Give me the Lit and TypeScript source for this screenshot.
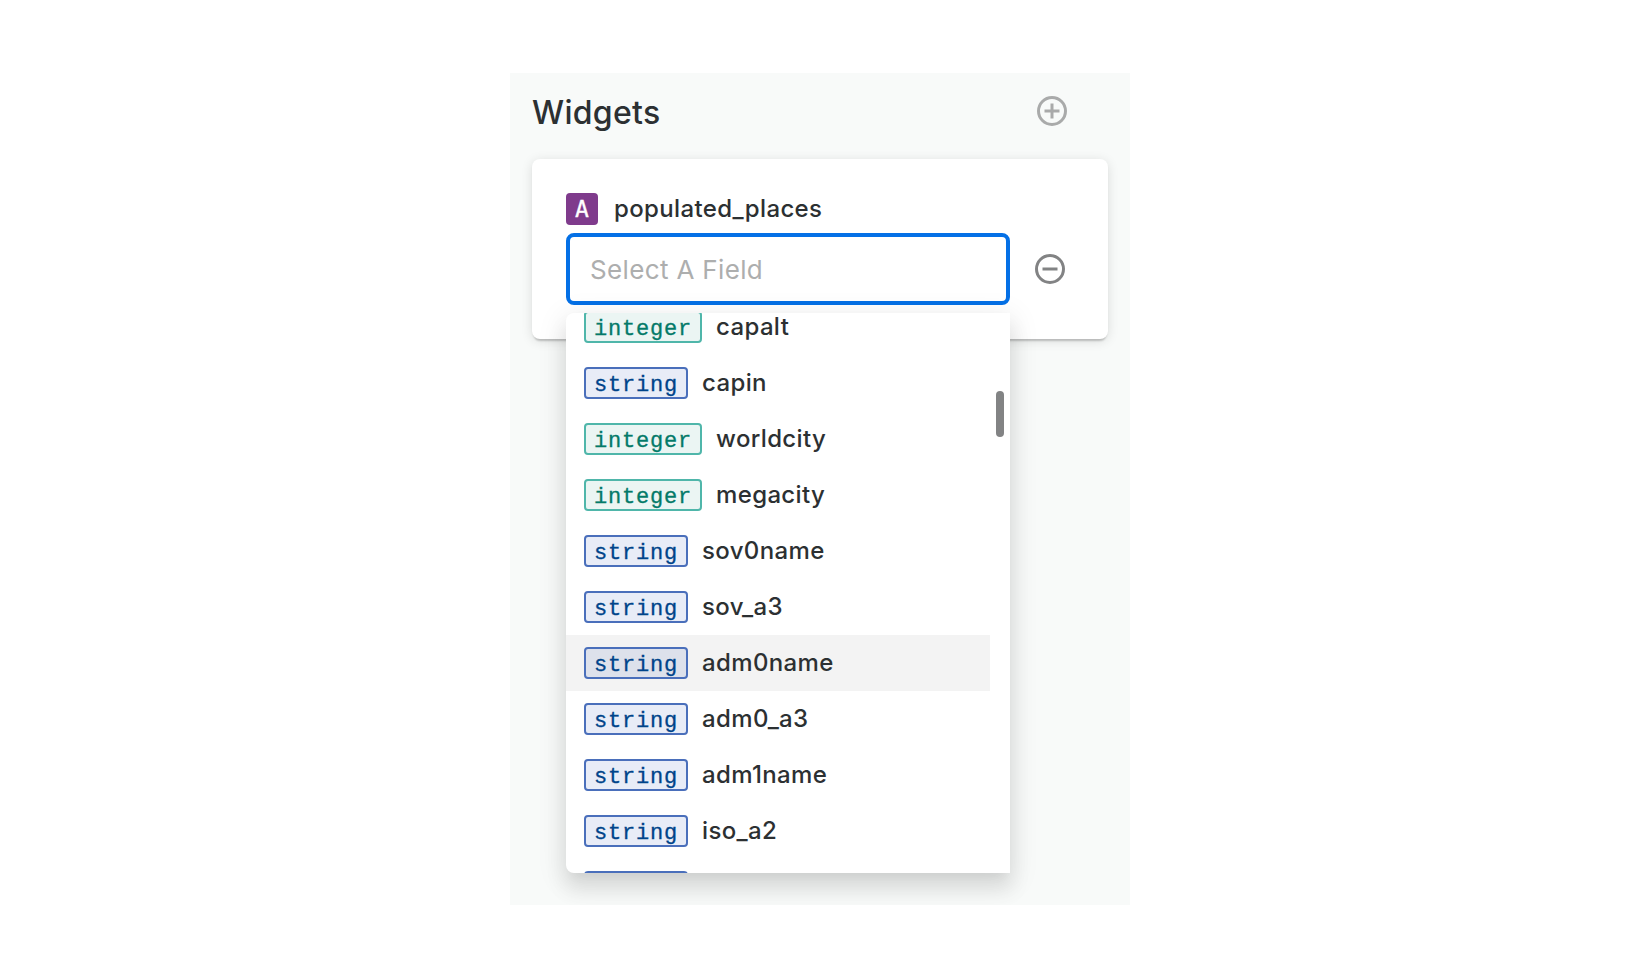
import { LitElement, html, css } from "lit";
import { customElement, property } from "lit/decorators.js";
import { classMap } from "lit/directives/class-map.js";

type FieldType = "integer" | "string";

@customElement("field-option")
class FieldOption extends LitElement {
  @property() type: FieldType = "string";
  @property() name = "";
  @property({ type: Boolean }) hovered = false;

  static styles = css`
    :host { display: block; }
    .row {
      display: flex;
      align-items: center;
      gap: 14px;
      height: 56px;
      padding-left: 18px;
      margin-right: 20px;
      box-sizing: border-box;
    }
    .hovered { background: #f3f3f3; }
    .tag {
      box-sizing: border-box;
      height: 32px;
      padding: 3px 8px 0 8px;
      border: 2px solid;
      border-radius: 4px;
      font: 400 22px/28px "Liberation Mono", monospace;
      letter-spacing: 0.8px;
      -webkit-text-stroke: 0.3px currentColor;
      white-space: nowrap;
    }
    .integer { color: #047a69; background: #ebf5f3; border-color: #4fb6aa; }
    .string { color: #00448a; background: #e8ecf7; border-color: #4a6fbb; }
    .hovered .string { background: #dde1eb; }
    .name { color: #2c3032; white-space: nowrap; }
  `;

  render() {
    return html`<div class=${classMap({ row: true, hovered: this.hovered })}>
      <span class="tag ${this.type}">${this.type}</span>
      <span class="name">${this.name}</span>
    </div>`;
  }
}

@customElement("app-root")
class AppRoot extends LitElement {
  private fields: { type: FieldType; name: string; hovered?: boolean }[] = [
    { type: "integer", name: "capalt" },
    { type: "string", name: "capin" },
    { type: "integer", name: "worldcity" },
    { type: "integer", name: "megacity" },
    { type: "string", name: "sov0name" },
    { type: "string", name: "sov_a3" },
    { type: "string", name: "adm0name", hovered: true },
    { type: "string", name: "adm0_a3" },
    { type: "string", name: "adm1name" },
    { type: "string", name: "iso_a2" },
    { type: "string", name: "" },
  ];

  static styles = css`
    :host {
      display: flex;
      justify-content: center;
      align-items: flex-start;
      box-sizing: border-box;
      height: 974px;
      padding-top: 73px;
      background: #fff;
      color: #2c3032;
      font: 500 24px/32px Inter, sans-serif;
      letter-spacing: 0.36px;
    }
    .panel {
      box-sizing: border-box;
      width: 620px;
      height: 832px;
      padding: 0 22px;
      background: #f8faf9;
      overflow: hidden;
    }
    .head {
      display: flex;
      align-items: center;
      justify-content: space-between;
      height: 76px;
      padding: 0 38px 10px 0;
      box-sizing: border-box;
      margin-bottom: 10px;
    }
    .title {
      margin: 0;
      padding-top: 13px;
      font-size: 32px;
      line-height: 40px;
      font-weight: 500;
      letter-spacing: 0.3px;
    }
    .head .icon { margin-top: 10px; }
    .icon { display: block; width: 36px; height: 36px; flex: none; }
    .add { color: #a9aaaa; }
    .remove { color: #828384; }
    .card {
      box-sizing: border-box;
      height: 180px;
      padding: 34px;
      background: #fff;
      border-radius: 8px;
      box-shadow: 0 4px 2px -2px rgba(0,0,0,.16), 0 2px 2px rgba(0,0,0,.04), 0 2px 12px rgba(0,0,0,.12);
    }
    .source { display: flex; align-items: center; gap: 16px; margin-bottom: 8px; }
    .badge {
      width: 32px;
      height: 32px;
      border-radius: 4px;
      background: #7f3b8c;
      color: #fff;
      text-align: center;
      font: 400 23px/33px "DejaVu Sans Mono", monospace;
      -webkit-text-stroke: 0.3px currentColor;
      letter-spacing: 0;
    }
    .control { display: flex; align-items: center; gap: 22px; }
    .select { position: relative; width: 444px; }
    .input {
      box-sizing: border-box;
      height: 72px;
      padding: 0 20px;
      border: 4px solid #0470e6;
      border-radius: 8px;
      background: #fff;
      color: #adaeae;
      font-size: 26px;
      font-weight: 400;
      letter-spacing: 0.35px;
      line-height: 66px;
    }
    .menu {
      position: absolute;
      z-index: 1;
      top: 80px;
      left: 0;
      width: 444px;
      height: 560px;
      border-radius: 8px 0 0 8px;
      background: #fff;
      box-shadow: 0 10px 10px -6px rgba(0,0,0,.04), 0 16px 20px 2px rgba(0,0,0,.08), 0 6px 28px 4px rgba(0,0,0,.08);
    }
    .list { height: 560px; overflow: hidden; border-radius: 8px 0 0 8px; }
    .scrolled { margin-top: -14px; }
    .thumb {
      position: absolute;
      top: 78px;
      right: 6px;
      width: 8px;
      height: 46px;
      border-radius: 4px;
      background: #828384;
    }
  `;

  render() {
    return html`<section class="panel">
      <header class="head">
        <h1 class="title">Widgets</h1>
        <svg class="icon add" viewBox="0 0 24 24" fill="currentColor">
          <path d="M13 7h-2v4H7v2h4v4h2v-4h4v-2h-4V7zM12 2a10 10 0 1 0 0 20 10 10 0 0 0 0-20zm0 18a8 8 0 1 1 0-16 8 8 0 0 1 0 16z" />
        </svg>
      </header>
      <div class="card">
        <div class="source"><span class="badge">A</span><span>populated_places</span></div>
        <div class="control">
          <div class="select">
            <div class="input">Select A Field</div>
            <div class="menu">
              <div class="list">
                <div class="scrolled">
                  ${this.fields.map((f) => html`<field-option .type=${f.type} .name=${f.name} .hovered=${!!f.hovered}></field-option>`)}
                </div>
              </div>
              <div class="thumb"></div>
            </div>
          </div>
          <svg class="icon remove" viewBox="0 0 24 24" fill="currentColor">
            <path d="M7 11v2h10v-2H7zM12 2a10 10 0 1 0 0 20 10 10 0 0 0 0-20zm0 18a8 8 0 1 1 0-16 8 8 0 0 1 0 16z" />
          </svg>
        </div>
      </div>
    </section>`;
  }
}
